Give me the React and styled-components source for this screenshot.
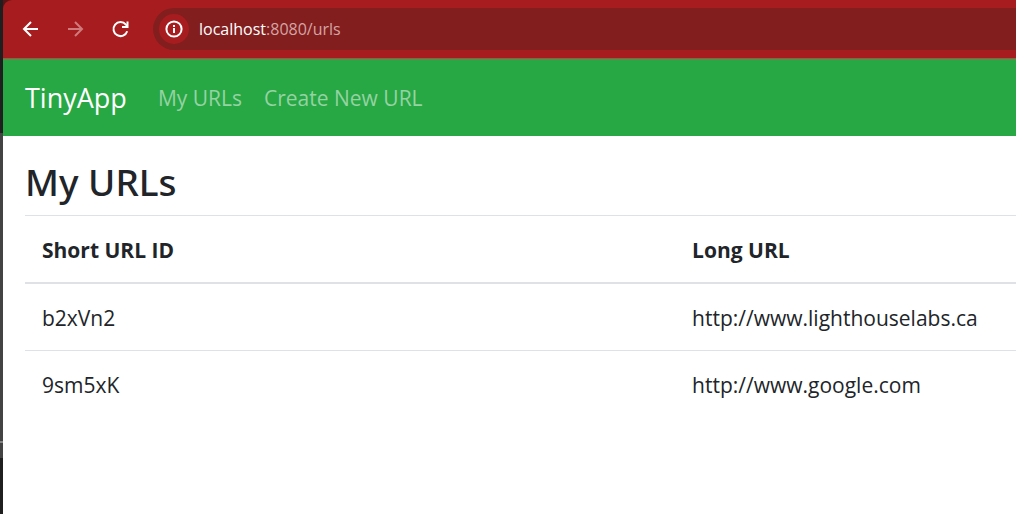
import React from "react";
import styled, { createGlobalStyle } from "styled-components";

const GlobalStyle = createGlobalStyle`
  *, *::before, *::after { box-sizing: border-box; }
  html, body { margin: 0; padding: 0; }
  body {
    background: #fff;
    color: #212529;
    font-family: "Segoe UI", "Open Sans", "Noto Sans", sans-serif;
    font-size: 21px;
    line-height: 32px;
  }
`;

const Screen = styled.div`
  display: flex;
  min-height: 100vh;
`;

const Backdrop = styled.div`
  display: flex;
  flex-direction: column;
  flex: 0 0 3px;
  background: #1f1f1f;
`;

const BackdropBand = styled.div`
  height: ${(p) => p.$height}px;
  background: ${(p) => p.$color};
`;

const Browser = styled.div`
  flex: 1;
  min-width: 0;
  background: linear-gradient(#5a1414, #5a1414) top left / 10px 10px no-repeat, #fff;
`;

const Toolbar = styled.div`
  display: flex;
  align-items: center;
  height: 59px;
  padding-left: 15px;
  background: #a71d1f;
  border-bottom: 1px solid #bd4a48;
  border-top-left-radius: 9px;
`;

const ToolButton = styled.button`
  display: flex;
  align-items: center;
  justify-content: center;
  width: 24px;
  height: 24px;
  margin-right: 21px;
  padding: 0;
  border: 0;
  background: none;
  color: #fff;

  &:disabled { color: #d17a7b; }
`;

const AddressBar = styled.div`
  display: flex;
  align-items: center;
  flex: 1;
  height: 42px;
  padding-left: 6px;
  background: #831e1e;
  border-radius: 21px 0 0 21px;
`;

const SiteInfo = styled.button`
  display: flex;
  align-items: center;
  justify-content: center;
  width: 30px;
  height: 30px;
  padding: 0;
  border: 0;
  border-radius: 50%;
  background: #a71d1f;
  color: #fff;
`;

const Address = styled.a`
  margin-left: 10px;
  color: #d3a5a5;
  font-size: 16px;
  line-height: 24px;
  text-decoration: none;
`;

const Host = styled.span`
  color: #fff;
`;

const Navbar = styled.nav`
  display: flex;
  align-items: center;
  height: 77px;
  padding: 0 22px;
  background: #28a745;
`;

const Brand = styled.a`
  margin-right: 31px;
  color: #fff;
  font-size: 27px;
  line-height: 40px;
  text-decoration: none;
`;

const NavLink = styled.a`
  margin-right: 22px;
  color: #94d3a2;
  text-decoration: none;
`;

const Main = styled.main`
  padding: 22px 0 0 22px;
`;

const Title = styled.h1`
  margin: 0 0 9px;
  font-family: "Segoe UI", "Noto Sans", "Open Sans", sans-serif;
  font-size: 37px;
  line-height: 48px;
  font-weight: 500;
`;

const UrlTable = styled.table`
  width: 100%;
  table-layout: fixed;
  border-collapse: separate;
  border-spacing: 0;
`;

const HeadCell = styled.th`
  width: ${(p) => p.$width || "auto"};
  padding: 18px 17px 16px;
  border-top: 1px solid #dee2e6;
  border-bottom: 2px solid #dee2e6;
  font-weight: 700;
  text-align: left;
`;

const Cell = styled.td`
  padding: 18px 17px 16px;

  tr + tr > & { border-top: 1px solid #dee2e6; }
`;

const urls = [
  { id: "b2xVn2", longUrl: "http://www.lighthouselabs.ca" },
  { id: "9sm5xK", longUrl: "http://www.google.com" },
];

const Icon = ({ size = 24, children }) => (
  <svg
    width={size}
    height={size}
    viewBox={`0 0 ${size} ${size}`}
    fill="none"
    stroke="currentColor"
    strokeWidth="2"
    aria-hidden="true"
  >
    {children}
  </svg>
);

export default function App() {
  return (
    <>
      <GlobalStyle />
      <Screen>
        <Backdrop>
          <BackdropBand $height={133} $color="#1f1f1f" />
          <BackdropBand $height={308} $color="#434343" />
          <BackdropBand $height={2} $color="#858585" />
          <BackdropBand $height={15} $color="#434343" />
        </Backdrop>
        <Browser>
          <Toolbar>
            <ToolButton aria-label="Back">
              <Icon><path d="M20 12H6.5M13 5L6 12l7 7" /></Icon>
            </ToolButton>
            <ToolButton aria-label="Forward" disabled>
              <Icon><path d="M5 12h13.5M12 5l7 7-7 7" /></Icon>
            </ToolButton>
            <ToolButton aria-label="Reload">
              <Icon>
                <path d="M19.2 14.2A7 7 0 1 1 17.9 7.6L19.5 9.4" />
                <path d="M19.5 4.5V10H14" />
              </Icon>
            </ToolButton>
            <AddressBar>
              <SiteInfo aria-label="View site information">
                <Icon size={20}>
                  <circle cx="10" cy="10" r="7.6" />
                  <path d="M10 9v5M10 6v2" />
                </Icon>
              </SiteInfo>
              <Address href="#urls"><Host>localhost</Host>:8080/urls</Address>
            </AddressBar>
          </Toolbar>
          <Navbar>
            <Brand href="#home">TinyApp</Brand>
            <NavLink href="#urls">My URLs</NavLink>
            <NavLink href="#new">Create New URL</NavLink>
          </Navbar>
          <Main id="urls">
            <Title>My URLs</Title>
            <UrlTable>
              <thead>
                <tr>
                  <HeadCell scope="col" $width="65.6%">Short URL ID</HeadCell>
                  <HeadCell scope="col">Long URL</HeadCell>
                </tr>
              </thead>
              <tbody>
                {urls.map((url) => (
                  <tr key={url.id}>
                    <Cell>{url.id}</Cell>
                    <Cell>{url.longUrl}</Cell>
                  </tr>
                ))}
              </tbody>
            </UrlTable>
          </Main>
        </Browser>
      </Screen>
    </>
  );
}
